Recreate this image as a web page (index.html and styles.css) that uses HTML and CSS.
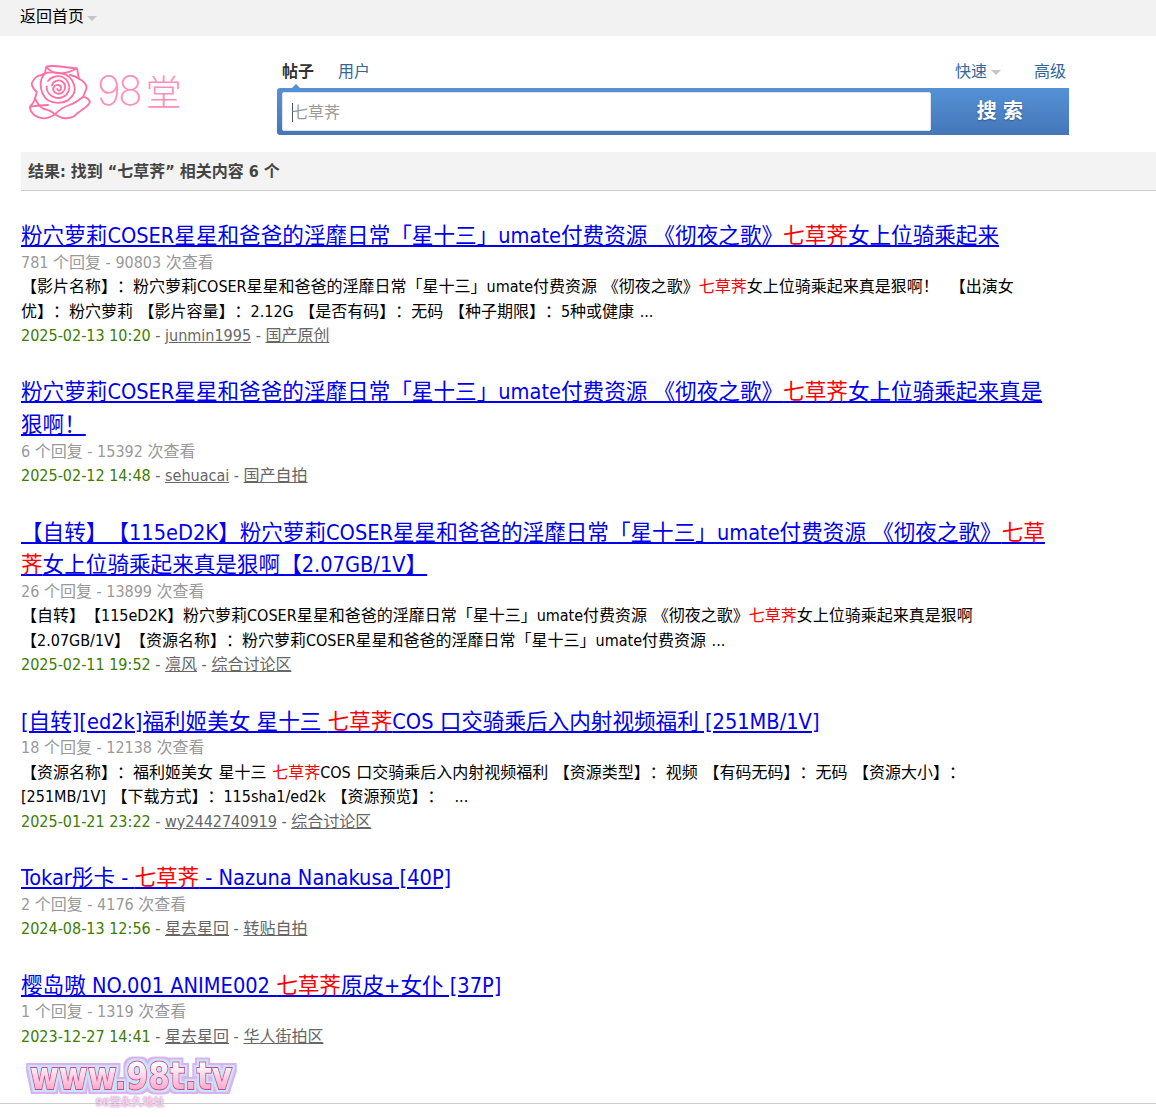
FILE: index.html
```html
<!DOCTYPE html>
<html lang="zh-CN">
<head>
  <meta charset="UTF-8">
  <title>搜索 - 98堂</title>
  <link rel="stylesheet" href="styles.css">
</head>
<body>
  <div class="topbar">
    <a class="home" href="#">返回首页</a><span class="caret"></span>
  </div>

  <div class="head">
    <a class="logo" href="#">
      <svg class="rose" width="62" height="60" viewBox="27 27 186 180" fill="none" stroke="#ff6fa5" stroke-width="5.5" stroke-linecap="round" stroke-linejoin="round">
        <path d="M80 35C95 28 135 38 170 40C176 50 172 62 178 72C190 78 198 86 200 97C198 108 192 116 190 125C200 128 208 134 210 142C204 156 180 166 162 184C150 192 138 190 128 189C118 186 112 182 105 178C95 184 82 192 70 190C55 188 45 184 38 175C30 168 30 160 30 155C38 146 44 138 45 130C48 122 50 116 50 110C42 104 36 94 35 85C38 76 44 70 50 65C58 60 68 60 75 55C76 48 76 40 80 35Z"/>
        <path d="M80 35C86 48 104 56 125 55C142 54 158 48 170 40M150 60C160 62 170 66 178 72M190 125C176 136 160 146 148 150C130 156 116 166 105 178M45 130C52 146 62 162 80 164C90 166 98 172 105 178M30 155C48 152 66 150 84 150"/>
        <path d="M75 55C68 62 62 74 62 88C62 106 68 124 84 136C100 146 126 146 144 136C160 124 168 106 162 88C156 72 142 58 125 55C108 52 88 50 75 55Z"/>
        <path d="M84 78C92 66 112 60 128 66C144 74 152 92 146 108C140 124 122 132 106 128C90 124 78 110 80 94"/>
        <path d="M96 92C98 78 116 72 128 80C138 88 138 104 128 112C118 120 104 116 100 106C98 96 106 88 116 90C124 92 126 102 120 106C116 108 112 106 112 102"/>
      </svg>
      <span class="logo-name"><span class="logo-num">98</span><span class="logo-tang">堂</span></span>
    </a>
    <div class="search">
      <div class="search-tabs">
        <a class="tab tab-on" href="#">帖子</a>
        <a class="tab" href="#">用户</a>
        <span class="search-links">
          <a class="tab" href="#">快速</a><span class="caret caret-link"></span>
          <a class="tab tab-adv" href="#">高级</a>
        </span>
      </div>
      <form class="search-box">
        <span class="notch"></span>
        <div class="search-input"><span class="cursor"></span>七草荠</div>
        <div class="search-btn">搜 索</div>
      </form>
    </div>
  </div>

  <h2 class="result-head">结果: 找到 “七草荠” 相关内容 6 个</h2>

  <ul class="results">
    <li class="item">
      <h3><a href="#">粉穴萝莉COSER星星和爸爸的淫靡日常「星十三」umate付费资源 《彻夜之歌》<em>七草荠</em>女上位骑乘起来</a></h3>
      <p class="stat">781 个回复 - 90803 次查看</p>
      <p>【影片名称】：粉穴萝莉COSER星星和爸爸的淫靡日常「星十三」umate付费资源 《彻夜之歌》<em>七草荠</em>女上位骑乘起来真是狠啊！&nbsp; 【出演女优】：粉穴萝莉 【影片容量】：2.12G 【是否有码】：无码 【种子期限】：5种或健康 ...</p>
      <p class="info"><span class="date">2025-02-13 10:20</span> - <a href="#">junmin1995</a> - <a href="#">国产原创</a></p>
    </li>
    <li class="item">
      <h3><a href="#">粉穴萝莉COSER星星和爸爸的淫靡日常「星十三」umate付费资源 《彻夜之歌》<em>七草荠</em>女上位骑乘起来真是狠啊！</a></h3>
      <p class="stat">6 个回复 - 15392 次查看</p>
      <p class="info"><span class="date">2025-02-12 14:48</span> - <a href="#">sehuacai</a> - <a href="#">国产自拍</a></p>
    </li>
    <li class="item">
      <h3><a href="#">【自转】【115eD2K】粉穴萝莉COSER星星和爸爸的淫靡日常「星十三」umate付费资源 《彻夜之歌》<em>七草荠</em>女上位骑乘起来真是狠啊【2.07GB/1V】</a></h3>
      <p class="stat">26 个回复 - 13899 次查看</p>
      <p>【自转】【115eD2K】粉穴萝莉COSER星星和爸爸的淫靡日常「星十三」umate付费资源 《彻夜之歌》<em>七草荠</em>女上位骑乘起来真是狠啊 【2.07GB/1V】【资源名称】：粉穴萝莉COSER星星和爸爸的淫靡日常「星十三」umate付费资源 ...</p>
      <p class="info"><span class="date">2025-02-11 19:52</span> - <a href="#">凛风</a> - <a href="#">综合讨论区</a></p>
    </li>
    <li class="item">
      <h3><a href="#">[自转][ed2k]福利姬美女 星十三 <em>七草荠</em>COS 口交骑乘后入内射视频福利 [251MB/1V]</a></h3>
      <p class="stat">18 个回复 - 12138 次查看</p>
      <p>【资源名称】：福利姬美女 星十三 <em>七草荠</em>COS 口交骑乘后入内射视频福利 【资源类型】：视频 【有码无码】：无码 【资源大小】： [251MB/1V] 【下载方式】：115sha1/ed2k 【资源预览】： &nbsp;...</p>
      <p class="info"><span class="date">2025-01-21 23:22</span> - <a href="#">wy2442740919</a> - <a href="#">综合讨论区</a></p>
    </li>
    <li class="item">
      <h3><a href="#">Tokar彤卡 - <em>七草荠</em> - Nazuna Nanakusa [40P]</a></h3>
      <p class="stat">2 个回复 - 4176 次查看</p>
      <p class="info"><span class="date">2024-08-13 12:56</span> - <a href="#">星去星回</a> - <a href="#">转贴自拍</a></p>
    </li>
    <li class="item">
      <h3><a href="#">樱岛嗷 NO.001 ANIME002 <em>七草荠</em>原皮+女仆 [37P]</a></h3>
      <p class="stat">1 个回复 - 1319 次查看</p>
      <p class="info"><span class="date">2023-12-27 14:41</span> - <a href="#">星去星回</a> - <a href="#">华人街拍区</a></p>
    </li>
  </ul>

  <div class="foot-line"></div>

  <!-- floating site address stamp -->
  <div class="stamp">
    <svg class="stamp-url" width="222" height="46" viewBox="0 0 222 46">
      <defs>
        <linearGradient id="stampFill" x1="0" y1="0" x2="0" y2="1">
          <stop offset="0.2" stop-color="#ffffff"/>
          <stop offset="0.9" stop-color="#ff9cc6"/>
        </linearGradient>
        <filter id="stampRing" x="-5%" y="-20%" width="110%" height="140%">
          <feMorphology in="SourceAlpha" operator="dilate" radius="2" result="inner"/>
          <feFlood flood-color="#c8e4f8"/>
          <feComposite in2="inner" operator="in" result="innerRing"/>
          <feMorphology in="SourceAlpha" operator="dilate" radius="3.5" result="outer"/>
          <feFlood flood-color="#d9b2ee"/>
          <feComposite in2="outer" operator="in" result="outerRing"/>
          <feMerge>
            <feMergeNode in="outerRing"/>
            <feMergeNode in="innerRing"/>
            <feMergeNode in="SourceGraphic"/>
          </feMerge>
        </filter>
      </defs>
      <text class="stamp-text" x="10" y="38" textLength="202" lengthAdjust="spacingAndGlyphs" fill="url(#stampFill)" filter="url(#stampRing)">www.98t.tv</text>
    </svg>
    <div class="stamp-sub">98堂永久地址</div>
  </div>
</body>
</html>
```

FILE: styles.css
```css
* { box-sizing: border-box; }
html, body { margin: 0; padding: 0; }
body { position: relative; height: 1117px; overflow: hidden; background: #fff; color: #000; font: 16px/24px "DejaVu Sans Condensed", "DejaVu Sans", "Noto Sans CJK SC", sans-serif; font-stretch: condensed; text-spacing-trim: space-all; }
a { color: inherit; }

.topbar { display: flex; align-items: center; height: 36px; padding: 0 0 2px 20px; background: #f2f2f2; }
.home { color: #000; text-decoration: none; }
.caret { display: inline-block; width: 0; height: 0; margin: 2px 0 0 3px; border: 5px solid transparent; border-top: 5px solid #c4c4c4; border-bottom: 0; }

.head { display: flex; height: 116px; padding-left: 29px; }
.logo { display: flex; align-items: flex-start; width: 248px; padding-top: 28px; text-decoration: none; }
.rose { flex: none; }
.logo-name { display: flex; margin: -4px 0 0 6px; color: #ff8fbd; }
.logo-num { font: 200 41px/60px "Inter", sans-serif; letter-spacing: -3px; }
.logo-tang { margin-left: 6px; font: 300 36px/60px "Noto Sans CJK SC", sans-serif; }

.search { width: 792px; }
.search-tabs { display: flex; height: 52px; padding: 24px 0 0 5px; }
.tab { color: #336699; text-decoration: none; margin-right: 24px; }
.tab-on { color: #333; font-weight: bold; }
.search-links { display: flex; margin-left: auto; }
.search-links .tab { margin-right: 0; }
.search-links .caret-link { margin: 10px 0 0 4px; }
.search-links .tab-adv { margin: 0 3px 0 33px; }
.search-box { position: relative; display: flex; height: 47px; padding: 4px 0 4px 5px; border-radius: 3px 0 0 3px; background: linear-gradient(#5591d6, #4577b8); }
.notch { position: absolute; left: 15px; top: -4px; width: 0; height: 0; border: 4px solid transparent; border-bottom: 4px solid #5591d6; border-top: 0; }
.search-input { display: flex; align-items: center; width: 649px; height: 39px; padding: 2px 0 0 9px; border: 1px solid #e0e4ea; border-radius: 2px; background: #fff; color: #999; }
.cursor { width: 1px; height: 19px; margin-right: -1px; background: #555; }
.search-btn { width: 138px; text-align: center; line-height: 39px; color: #fff; font-size: 20px; font-weight: bold; text-shadow: 0 1px 2px #2f5a94; }

.result-head { margin: 0 0 0 21px; height: 39px; padding: 8px 0 0 7px; border-bottom: 1px solid #ccc; background: #f3f3f3; color: #444; font-size: 16px; line-height: 24px; font-weight: bold; }

.results { margin: 0; padding: 29px 0 0 21px; list-style: none; width: 1061px; }
.item { margin-bottom: 27.9px; }
.item h3 { margin: 0 0 -2px; font-size: 21.6px; line-height: 32.6px; font-weight: normal; }
.item h3 a { color: #0000ee; }
.item em { color: #f00; font-style: normal; }
.item p { margin: 0; line-height: 24.5px; width: 1000px; word-spacing: 1px; }
.item .stat { color: #999; word-spacing: 0; }
.date { color: #3d7c00; }
.item .info { color: #666; word-spacing: 0; }
.info a { color: #666; }

.foot-line { position: absolute; left: 0; right: 0; top: 1103px; border-top: 1px solid #ccc; }

.stamp { position: absolute; left: 20px; top: 1051px; width: 222px; text-align: center; }
.stamp-url { display: block; overflow: visible; }
.stamp-text { font: bold 38px "DejaVu Sans", sans-serif; stroke: #c8478a; stroke-width: 2px; paint-order: stroke fill; }
.stamp-sub { margin: -1px 0 0 -2px; color: #f8d3e5; font-size: 11px; line-height: 13px; font-weight: bold; text-shadow: 0 0 2px #a77fc9; }
```
